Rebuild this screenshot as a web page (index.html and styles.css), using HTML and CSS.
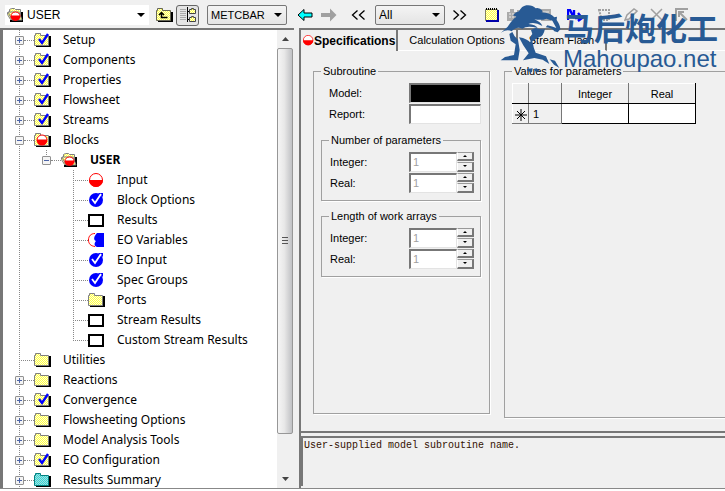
FILE: index.html
```html
<!DOCTYPE html>
<html lang="en">
<head>
<meta charset="utf-8">
<title>Data Browser</title>
<link rel="stylesheet" href="styles.css">
</head>
<body>
<svg class="defs" aria-hidden="true">
  <defs>
    <pattern id="dy" width="2" height="2" patternUnits="userSpaceOnUse"><path fill="#ffffd8" d="M0 0h2v2H0z"/><path fill="#ffff48" d="M0 0h1v1H0zM1 1h1v1H1z"/></pattern>
    <pattern id="dc" width="2" height="2" patternUnits="userSpaceOnUse"><path fill="#a8dcdc" d="M0 0h2v2H0z"/><path fill="#30d8d8" d="M0 0h1v1H0zM1 1h1v1H1z"/></pattern>
    <symbol id="folder" viewBox="0 0 17 16"><path d="M2 14h14V4" fill="none" stroke="#000" stroke-width="2"/><path d="M.5 13.500v-10h1v-2h5v2h8v10z" fill="url(#dy)" stroke="#808080"/></symbol>
    <symbol id="results" viewBox="0 0 17 16"><path d="M2 14h14V4" fill="none" stroke="#000" stroke-width="2"/><path d="M.5 13.500v-10h1v-2h5v2h8v10z" fill="url(#dc)" stroke="#008080"/></symbol>
    <symbol id="done" viewBox="0 0 17 16"><use href="#folder"/><path d="M5 7l3 4 6-9" fill="none" stroke="#00f" stroke-width="2.400"/></symbol>
    <symbol id="todo" viewBox="0 0 17 16"><use href="#folder"/><path d="M3 8a5 5 0 0 1 10 0z" fill="#fff" stroke="#f00"/><path d="M2.500 8h11a5.500 5.500 0 0 1-11 0z" fill="#f00"/></symbol>
    <symbol id="open" viewBox="0 0 17 16"><path d="M3 14h12V5" fill="none" stroke="#000" stroke-width="2"/><path d="M3.500 12.500L.500 7.500v-2h2v-3l2-1h3l1 1h5v10z" fill="url(#dy)" stroke="#808080"/><path d="M1 5h11l3 8H5z" fill="url(#dy)" stroke="#808080"/><path d="M4 9a4.500 4 0 0 1 9 0z" fill="#fff" stroke="#f00"/><path d="M3.500 9h10a5 5 0 0 1-10 0z" fill="#f00"/></symbol>
    <symbol id="half" viewBox="0 0 17 16"><circle cx="8" cy="8" r="6.500" fill="#fff" stroke="#f00"/><path d="M1 8h14a7 7 0 0 1-14 0z" fill="#f00"/></symbol>
    <symbol id="check" viewBox="0 0 17 16"><circle cx="8" cy="8" r="7" fill="#00f"/><path d="M10 1h5v4z" fill="#00f"/><path d="M4 7l3 4 6-9" fill="none" stroke="#fff" stroke-width="1.800"/></symbol>
    <symbol id="box" viewBox="0 0 17 16"><path d="M1 3h14v11H1z" fill="#fff" stroke="#000" stroke-width="2"/></symbol>
    <symbol id="vars" viewBox="0 0 17 16"><path d="M7 1.500C3 1.500.500 4 .500 8s2.500 6 6.500 6.500" fill="#fff" stroke="#f00"/><path d="M9 1h7v14H9c-3-1-3-4-1-6-3-1-2-5 1-8z" fill="#00f"/></symbol>
  </defs>
</svg>

<header class="toolbar">
  <div class="path">
    <svg class="icon"><use href="#open"/></svg>
    <select class="bare" aria-label="Object"><option>USER</option></select>
    <span class="arrow"></span>
  </div>
  <button class="tool up" aria-label="Up one level"><svg width="17" height="15"><path d="M2 13h14V4" fill="none" stroke="#000" stroke-width="2"/><path d="M.5 12.500v-10h1v-2h5v2h8v10z" fill="url(#dy)" stroke="#665"/><path d="M5.500 5v4.500h6M3 7l2.500-2.500L8 7" fill="none" stroke="#000" stroke-width="1.500"/></svg></button>
  <button class="tool toggle" aria-label="Show tree"><svg width="16" height="16"><path d="M0 2.500h6M0 4.500h6M0 6.500h6M0 8.500h6M0 10.500h6M0 12.500h6" stroke="#aaa"/><path d="M7.500 0v15M7 4.500h3M7 12.500h3" stroke="#000"/><path d="M9.500 6.500v-4h2v-1h2v1h2v4zM9.500 14.500v-4h2v-1h2v1h2v4z" fill="url(#dy)" stroke="#444"/></svg></button>
  <div class="combo units"><select class="bare" aria-label="Units"><option>METCBAR</option></select><span class="arrow"></span></div>
  <button class="tool" aria-label="Back"><svg width="16" height="14"><path d="M1 7l6-5.500v3.500h8v4H7v3.500z" fill="#0ff" stroke="#000"/></svg></button>
  <button class="tool fwd" aria-label="Forward"><svg width="16" height="14"><path d="M15.500 7L9 .500V5H0v4h9v4.500z" fill="#a0a0a0"/></svg></button>
  <button class="tool prev" aria-label="Previous"><svg width="15" height="12"><path d="M6.500 1.500L1.500 6l5 4.500M13.500 1.500L8.500 6l5 4.500" fill="none" stroke="#000" stroke-width="1.300"/></svg></button>
  <div class="combo filter"><select class="bare" aria-label="Filter"><option>All</option></select><span class="arrow"></span></div>
  <button class="tool next" aria-label="Next"><svg width="15" height="12"><path d="M1.500 1.500l5 4.500-5 4.500M8.500 1.500l5 4.500-5 4.500" fill="none" stroke="#000" stroke-width="1.300"/></svg></button>
  <button class="tool notes" aria-label="Comments"><svg width="14" height="14"><path d="M.5 1.500h12v11H.500z" fill="url(#dy)" stroke="#808060"/><path d="M13 2v11H1" fill="none" stroke="#00a" stroke-width="2"/><path d="M1 1h12" stroke="#000" stroke-width="2" stroke-dasharray="1 1"/></svg></button>
  <button class="tool" aria-label="Status" disabled><svg width="17" height="15"><path d="M1 4h3V1h4v3h3V2h4v11H1z" fill="#aaa"/><path d="M3 6h9M3 9h9" stroke="#eee" stroke-dasharray="2 1"/></svg></button>
  <button class="tool stat" aria-label="Plot" disabled><svg width="15" height="15"><path d="M2 1h10v12H2z" fill="#aaa"/><path d="M4 4h6M4 8h6" stroke="#eee"/></svg></button>
  <button class="tool next-input" aria-label="Next input"><svg width="17" height="13"><path d="M1 11V1h2l4 8V1M8 9h6M11 4l4 5-4 3" fill="none" stroke="#00f" stroke-width="2.400"/></svg></button>
  <button class="tool grey" aria-label="Select" disabled><svg width="15" height="14"><path d="M1 2h10v10H4z" fill="none" stroke="#a0a0a0" stroke-width="2" stroke-dasharray="2 1"/></svg></button>
  <button class="tool grey" aria-label="Edit" disabled><svg width="15" height="14"><path d="M1 12l2-5 7-6 3 2-8 8z" fill="none" stroke="#a0a0a0" stroke-width="1.500"/></svg></button>
  <button class="tool grey" aria-label="Delete" disabled><svg width="14" height="14"><path d="M1 1l11 11M12 1L1 12" stroke="#a0a0a0" stroke-width="1.500"/></svg></button>
  <button class="tool grey" aria-label="Reveal" disabled><svg width="15" height="14"><path d="M1 13V1h12M4 4l8 8M4 9V4h5" fill="none" stroke="#a0a0a0" stroke-width="2"/></svg></button>
</header>

<main class="main">
  <nav class="side" aria-label="Data tree">
    <ul class="tree">
      <li><div class="row"><button class="exp plus" aria-label="Expand"></button><i></i><svg class="icon"><use href="#done"/></svg><a href="#">Setup</a></div></li>
      <li><div class="row"><button class="exp plus" aria-label="Expand"></button><i></i><svg class="icon"><use href="#done"/></svg><a href="#">Components</a></div></li>
      <li><div class="row"><button class="exp plus" aria-label="Expand"></button><i></i><svg class="icon"><use href="#done"/></svg><a href="#">Properties</a></div></li>
      <li><div class="row"><button class="exp plus" aria-label="Expand"></button><i></i><svg class="icon"><use href="#done"/></svg><a href="#">Flowsheet</a></div></li>
      <li><div class="row"><button class="exp plus" aria-label="Expand"></button><i></i><svg class="icon"><use href="#done"/></svg><a href="#">Streams</a></div></li>
      <li><div class="row"><button class="exp" aria-label="Collapse"></button><i></i><svg class="icon"><use href="#todo"/></svg><a href="#">Blocks</a></div>
        <ul>
          <li><div class="row"><button class="exp" aria-label="Collapse"></button><i></i><svg class="icon"><use href="#open"/></svg><a href="#" class="current">USER</a></div>
            <ul>
              <li><div class="row leaf"><i></i><svg class="icon"><use href="#half"/></svg><a href="#">Input</a></div></li>
              <li><div class="row leaf"><i></i><svg class="icon"><use href="#check"/></svg><a href="#">Block Options</a></div></li>
              <li><div class="row leaf"><i></i><svg class="icon"><use href="#box"/></svg><a href="#">Results</a></div></li>
              <li><div class="row leaf"><i></i><svg class="icon"><use href="#vars"/></svg><a href="#">EO Variables</a></div></li>
              <li><div class="row leaf"><i></i><svg class="icon"><use href="#check"/></svg><a href="#">EO Input</a></div></li>
              <li><div class="row leaf"><i></i><svg class="icon"><use href="#check"/></svg><a href="#">Spec Groups</a></div></li>
              <li><div class="row leaf"><i></i><svg class="icon"><use href="#folder"/></svg><a href="#">Ports</a></div></li>
              <li><div class="row leaf"><i></i><svg class="icon"><use href="#box"/></svg><a href="#">Stream Results</a></div></li>
              <li><div class="row leaf"><i></i><svg class="icon"><use href="#box"/></svg><a href="#">Custom Stream Results</a></div></li>
            </ul>
          </li>
        </ul>
      </li>
      <li><div class="row leaf"><i></i><svg class="icon"><use href="#folder"/></svg><a href="#">Utilities</a></div></li>
      <li><div class="row"><button class="exp plus" aria-label="Expand"></button><i></i><svg class="icon"><use href="#folder"/></svg><a href="#">Reactions</a></div></li>
      <li><div class="row"><button class="exp plus" aria-label="Expand"></button><i></i><svg class="icon"><use href="#done"/></svg><a href="#">Convergence</a></div></li>
      <li><div class="row"><button class="exp plus" aria-label="Expand"></button><i></i><svg class="icon"><use href="#folder"/></svg><a href="#">Flowsheeting Options</a></div></li>
      <li><div class="row"><button class="exp plus" aria-label="Expand"></button><i></i><svg class="icon"><use href="#folder"/></svg><a href="#">Model Analysis Tools</a></div></li>
      <li><div class="row"><button class="exp plus" aria-label="Expand"></button><i></i><svg class="icon"><use href="#done"/></svg><a href="#">EO Configuration</a></div></li>
      <li><div class="row"><button class="exp plus" aria-label="Expand"></button><i></i><svg class="icon"><use href="#results"/></svg><a href="#">Results Summary</a></div></li>
    </ul>
    <div class="scroll">
      <button aria-label="Scroll up"><svg width="7" height="4"><path d="M0 4l3.500-4L7 4z" fill="#444"/></svg></button>
      <div class="thumb"><svg width="6" height="8"><path d="M0 .500h6M0 3.500h6M0 6.500h6" stroke="#555"/></svg></div>
      <button aria-label="Scroll down"><svg width="7" height="4"><path d="M0 0l3.500 4L7 0z" fill="#444"/></svg></button>
    </div>
  </nav>

  <section class="work">
    <div class="form">
      <div class="tabs" role="tablist">
        <button class="tab active" role="tab" aria-selected="true"><svg width="11" height="11" viewBox="1 1 15 15"><use href="#half" width="17" height="16"/></svg>Specifications</button>
        <button class="tab" role="tab">Calculation Options</button>
        <button class="tab" role="tab">Stream Flash</button>
      </div>
      <div class="page">
        <fieldset class="group sub">
          <legend>Subroutine</legend>
          <div class="field"><label for="model">Model:</label><input id="model" class="text black"></div>
          <div class="field"><label for="report">Report:</label><input id="report" class="text"></div>
          <fieldset class="inner">
            <legend>Number of parameters</legend>
            <div class="field"><label for="np">Integer:</label><span class="spin"><input id="np" value="1" disabled><span class="btns"><button aria-label="Up"></button><button class="dn" aria-label="Down"></button></span></span></div>
            <div class="field"><label for="nr">Real:</label><span class="spin"><input id="nr" value="1" disabled><span class="btns"><button aria-label="Up"></button><button class="dn" aria-label="Down"></button></span></span></div>
          </fieldset>
          <fieldset class="inner">
            <legend>Length of work arrays</legend>
            <div class="field"><label for="li">Integer:</label><span class="spin"><input id="li" value="1" disabled><span class="btns"><button aria-label="Up"></button><button class="dn" aria-label="Down"></button></span></span></div>
            <div class="field"><label for="lr">Real:</label><span class="spin"><input id="lr" value="1" disabled><span class="btns"><button aria-label="Up"></button><button class="dn" aria-label="Down"></button></span></span></div>
          </fieldset>
        </fieldset>
        <fieldset class="group values">
          <legend>Values for parameters</legend>
          <table>
            <thead><tr><th class="mark"></th><th class="num"></th><th>Integer</th><th>Real</th></tr></thead>
            <tbody><tr><td class="head"><svg width="12" height="12"><path d="M6 0v12M0 6h12M2 2l8 8M10 2l-8 8" stroke="#000"/></svg></td><td class="head first">1</td><td></td><td></td></tr></tbody>
          </table>
        </fieldset>
      </div>
    </div>
    <div class="prompt">User-supplied model subroutine name.</div>
  </section>
</main>
<footer class="status"></footer>

<div class="mark-over">
  <svg width="80" height="82" viewBox="0 0 240 246" fill="#285a94">
    <path d="M18 98L38 80Q52 58 64 50L54 46Q62 36 72 34Q80 18 94 16Q112 14 122 25Q134 22 143 33L140 37Q166 38 178 52L186 50L185 60Q196 76 196 88L188 97L178 94Q172 84 152 82L157 76Q172 80 184 84L172 62L154 56Q140 62 118 58Q138 66 142 78Q118 64 100 72Q122 74 128 84Q96 76 82 86Q64 78 50 94Q36 86 18 98Z"/>
    <path d="M52 96Q56 108 69 119L74 150L69 181H17L30 171L57 165L62 133L47 122L43 102Z"/>
    <path d="M72 112Q98 116 107 130Q103 110 112 102L108 90L122 84Q142 91 150 86Q146 108 132 112L112 124Q116 146 122 158L153 169L163 192L143 179L118 174L84 181L101 160Q83 136 72 112Z"/>
    <path d="M164 178L180 182L193 204L177 194ZM95 207L113 205L111 217L98 214ZM116 207L125 205L134 214L123 216Z"/>
  </svg>
  <div class="mark-text"><span class="cn" lang="zh">马后炮化工</span><span class="en">Mahoupao.net</span></div>
</div>
</body>
</html>
```
FILE: styles.css
```css
* { box-sizing: border-box; }
body {
  margin: 0; height: 100vh; display: flex; flex-direction: column; overflow: hidden;
  position: relative; background: #f0f0f0; color: #000;
  font: 11px/14px "Liberation Sans", Arial, sans-serif;
}
button, input, select { font: inherit; color: inherit; margin: 0; padding: 0; border: 0; background: none; }
svg { display: block; flex: none; }
.defs { position: absolute; width: 0; height: 0; }
.icon { width: 17px; height: 16px; }

.toolbar { height: 28px; flex: none; display: flex; align-items: center; padding: 2px 0 0 5px; }
.path { display: flex; align-items: center; width: 144px; height: 20px; background: #fff; padding: 0 4px 0 2px; font-size: 12px; }
.bare { appearance: none; flex: 1; min-width: 0; padding-left: 3px; outline: 0; }
.arrow { border: 4px solid transparent; border-top-color: #000; border-bottom: 0; pointer-events: none; }
.combo { display: flex; align-items: center; height: 20px; padding-right: 4px; border: 1px solid #777; border-radius: 2px; background: linear-gradient(#f4f4f4, #e4e4e4); font-size: 12px; }
.units { width: 80px; margin-right: 10px; font-size: 11px; }
.filter { width: 70px; margin: 0 7px 0 9px; }
.tool { display: flex; align-items: center; justify-content: center; }
.up { margin-left: 7px; }
.toggle { width: 23px; height: 21px; margin: 0 8px 0 3px; border: 1px solid #666; border-radius: 3px; background: #e4e4e4; }
.fwd { margin-left: 8px; }
.prev { margin-left: 14px; }
.notes { margin: 0 7px 0 18px; }
.stat { margin-left: 16px; }
.next-input { margin: 0 14px 0 13px; }
.grey { margin-right: 11px; }

.main { flex: 1; min-height: 0; display: flex; }
.side { flex: none; width: 294px; display: flex; border: solid #777; border-width: 2px 0 0 3px; background: #fff; }
.tree { flex: 1; min-width: 0; overflow: hidden; font: 12px/20px "Noto Sans", "Open Sans", sans-serif; }
.tree, .tree ul { list-style: none; margin: 0; padding: 0; }
.tree { padding-left: 12px; }
.tree ul { padding-left: 27px; }
.tree li { background: repeating-linear-gradient(#888 0 1px, transparent 1px 2px) 4px 0 / 1px 100% no-repeat; }
.tree ul li:last-child { background-size: 1px 10px; }
.row { display: flex; align-items: center; height: 20px; }
.row i { width: 10px; border-top: 1px dotted #888; }
.leaf i { width: 15px; margin-left: 4px; }
.row a { color: inherit; text-decoration: none; margin-left: 12px; white-space: nowrap; }
.row .current { font-weight: bold; }
.exp { width: 9px; height: 9px; border: 1px solid #919191; border-radius: 1px; background: linear-gradient(#4b63a7, #4b63a7) center / 5px 1px no-repeat, #f4f4f4; }
.exp.plus { background: linear-gradient(#4b63a7, #4b63a7) center / 5px 1px no-repeat, linear-gradient(#4b63a7, #4b63a7) center / 1px 5px no-repeat, #f4f4f4; }
.scroll { width: 17px; flex: none; display: flex; flex-direction: column; background: #f0f0f0; padding-right: 1px; }
.scroll button { height: 18px; display: flex; align-items: center; justify-content: center; }
.thumb { flex: 0 1 386px; border: 1px solid #979797; border-radius: 2px; background: linear-gradient(90deg, #f5f5f5, #e8e8e8 45%, #c0c1c4); display: flex; align-items: center; justify-content: center; }
.scroll button:last-child { margin-top: auto; }

.work { flex: 1; min-width: 0; margin-left: 5px; display: flex; flex-direction: column; border-left: 2px solid #777; }
.form { flex: 1; min-height: 0; display: flex; flex-direction: column; border-top: 2px solid #777; border-bottom: 2px solid #777; }
.tabs { display: flex; height: 21px; flex: none; }
.tab { display: flex; align-items: center; justify-content: center; padding: 0 11px 1px; border-right: 2px solid #777; border-bottom: 1px solid #fff; white-space: nowrap; }
.tab.active { padding: 0 1px 0 2px; border-bottom: 0; font-weight: bold; font-size: 12px; }
.tabs::after { content: ""; flex: 1; border-bottom: 1px solid #fff; }
.page { flex: 1; min-height: 0; display: flex; align-items: stretch; padding: 13px 0 13px 12px; }
fieldset { margin: 0; padding: 0; min-width: 0; border: 1px solid #a0a0a0; box-shadow: 1px 1px #fff; }
legend { margin-left: 7px; padding: 0 2px; line-height: 14px; }
.group > legend { margin-left: 0; }
.sub { width: 177px; flex: none; padding: 4px 8px 0 7px; margin-bottom: 4px; }
.values { flex: 1; margin-left: 14px; border-right: 0; padding: 5px 0 0 7px; }
.field { display: flex; align-items: center; justify-content: space-between; height: 21px; padding-left: 8px; }
.inner { margin-top: 9px; padding: 4px 6px 7px 0; }
.inner + .inner { margin-top: 8px; }
.text { width: 72px; height: 20px; background: #fff; border: 1px solid; border-color: #777 #e3e3e3 #e3e3e3 #777; border-width: 2px 1px 1px 2px; }
.black { background: #000; }
.spin { display: flex; width: 65px; height: 20px; }
.spin input { flex: 1; min-width: 0; padding-left: 2px; background: #fff; color: #a0a0a0; border: solid; border-width: 2px 1px 1px 2px; border-color: #777 #e3e3e3 #e3e3e3 #777; }
.btns { width: 17px; display: flex; flex-direction: column; gap: 1px; }
.btns button { flex: 1; display: flex; align-items: center; justify-content: center; border: solid; border-width: 1px 2px 2px 1px; border-color: #999 #777 #777 #fff; }
.btns button::before { content: ""; border: 2px solid transparent; border-top: 0; border-bottom-color: #000; }
.btns .dn::before { border-top: 2px solid #000; border-bottom: 0; }

table { border-collapse: collapse; table-layout: fixed; width: 184px; }
th, td { height: 20px; padding: 0; border: 1px solid #000; background: #fff; font-weight: normal; text-align: center; }
th, .head { background: #f0f0f0; border-color: #777; }
thead th { border-top-color: #fff; border-bottom-color: #000; }
thead th:last-child { border-right-color: #000; }
td:first-child, th:first-child { border-left-color: #fff; }
.mark { width: 16px; }
.num { width: 33px; }
.head svg { margin: 2px auto 0; }
.first { text-align: left; padding-left: 4px; }
tbody td { border-bottom-color: #000; }

.prompt { height: 50px; flex: none; margin: 3px 0 2px; padding: 1px 0 0 1px; border: solid #777; border-width: 2px 0 0 2px; font: 10px/13px "Liberation Mono", monospace; color: #310; }
.status { height: 3px; flex: none; border-top: 1px solid #888; background: #fff; }

.mark-over { position: absolute; left: 495px; top: 0; display: flex; color: #285a94; pointer-events: none; }
.mark-text { display: flex; flex-direction: column; padding-top: 9px; margin-left: -12px; white-space: nowrap; }
.cn { font: bold 31px/36px "Noto Sans CJK SC", sans-serif; }
.en { font: 24px/28px "Liberation Sans", Arial, sans-serif; }
```
